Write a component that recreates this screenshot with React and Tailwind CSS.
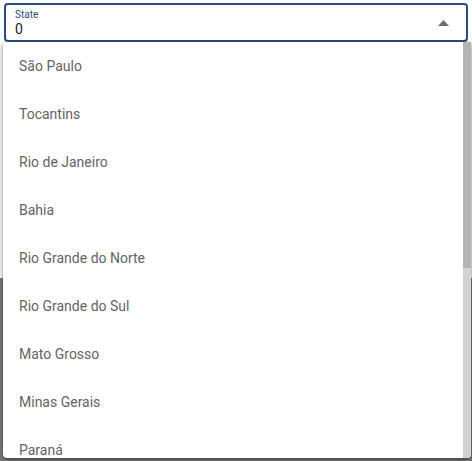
const states = [
  "São Paulo",
  "Tocantins",
  "Rio de Janeiro",
  "Bahia",
  "Rio Grande do Norte",
  "Rio Grande do Sul",
  "Mato Grosso",
  "Minas Gerais",
  "Paraná",
];

export default function App() {
  return (
    <div className="relative flex h-[461px] w-[472px] flex-col overflow-hidden bg-white font-['Roboto',sans-serif]">
      {/* SELECT */}
      <div className="px-[4px] pt-[3px]">
        <div className="flex h-[39px] items-center rounded-[4px] border-2 border-[#2b4b7e] pl-[9px] pr-[17px]">
          <div className="flex flex-1 flex-col">
            <span className="text-[10px] leading-[12px] text-[#2b4b7e]">State</span>
            <span className="text-[14px] leading-[16px] text-[#222]">0</span>
          </div>
          <svg width="11" height="6" viewBox="0 0 11 6">
            <path d="M0 6 L5.5 0 L11 6 Z" fill="#6e6e6e" />
          </svg>
        </div>
      </div>

      {/* BACKGROUND */}
      <div className="h-[236px] bg-white" />
      <div className="flex-1 bg-[#7e7e7e]" />

      {/* MENU */}
      <div className="absolute left-[3px] top-[42px] flex h-[416px] w-[468px] overflow-hidden rounded-b-[4px] bg-white shadow-[0_3px_6px_rgba(0,0,0,0.35),0_1px_3px_rgba(0,0,0,0.25)]">
        <ul className="flex-1">
          {states.map((s) => (
            <li
              key={s}
              className="flex h-[48px] items-center pl-[16px] text-[14px] text-[#646464]"
            >
              {s}
            </li>
          ))}
        </ul>
        <div className="flex w-[8px] flex-col bg-[#d2d2d2]">
          <div className="h-[226px] bg-[#b4b4b4]" />
        </div>
      </div>
    </div>
  );
}
